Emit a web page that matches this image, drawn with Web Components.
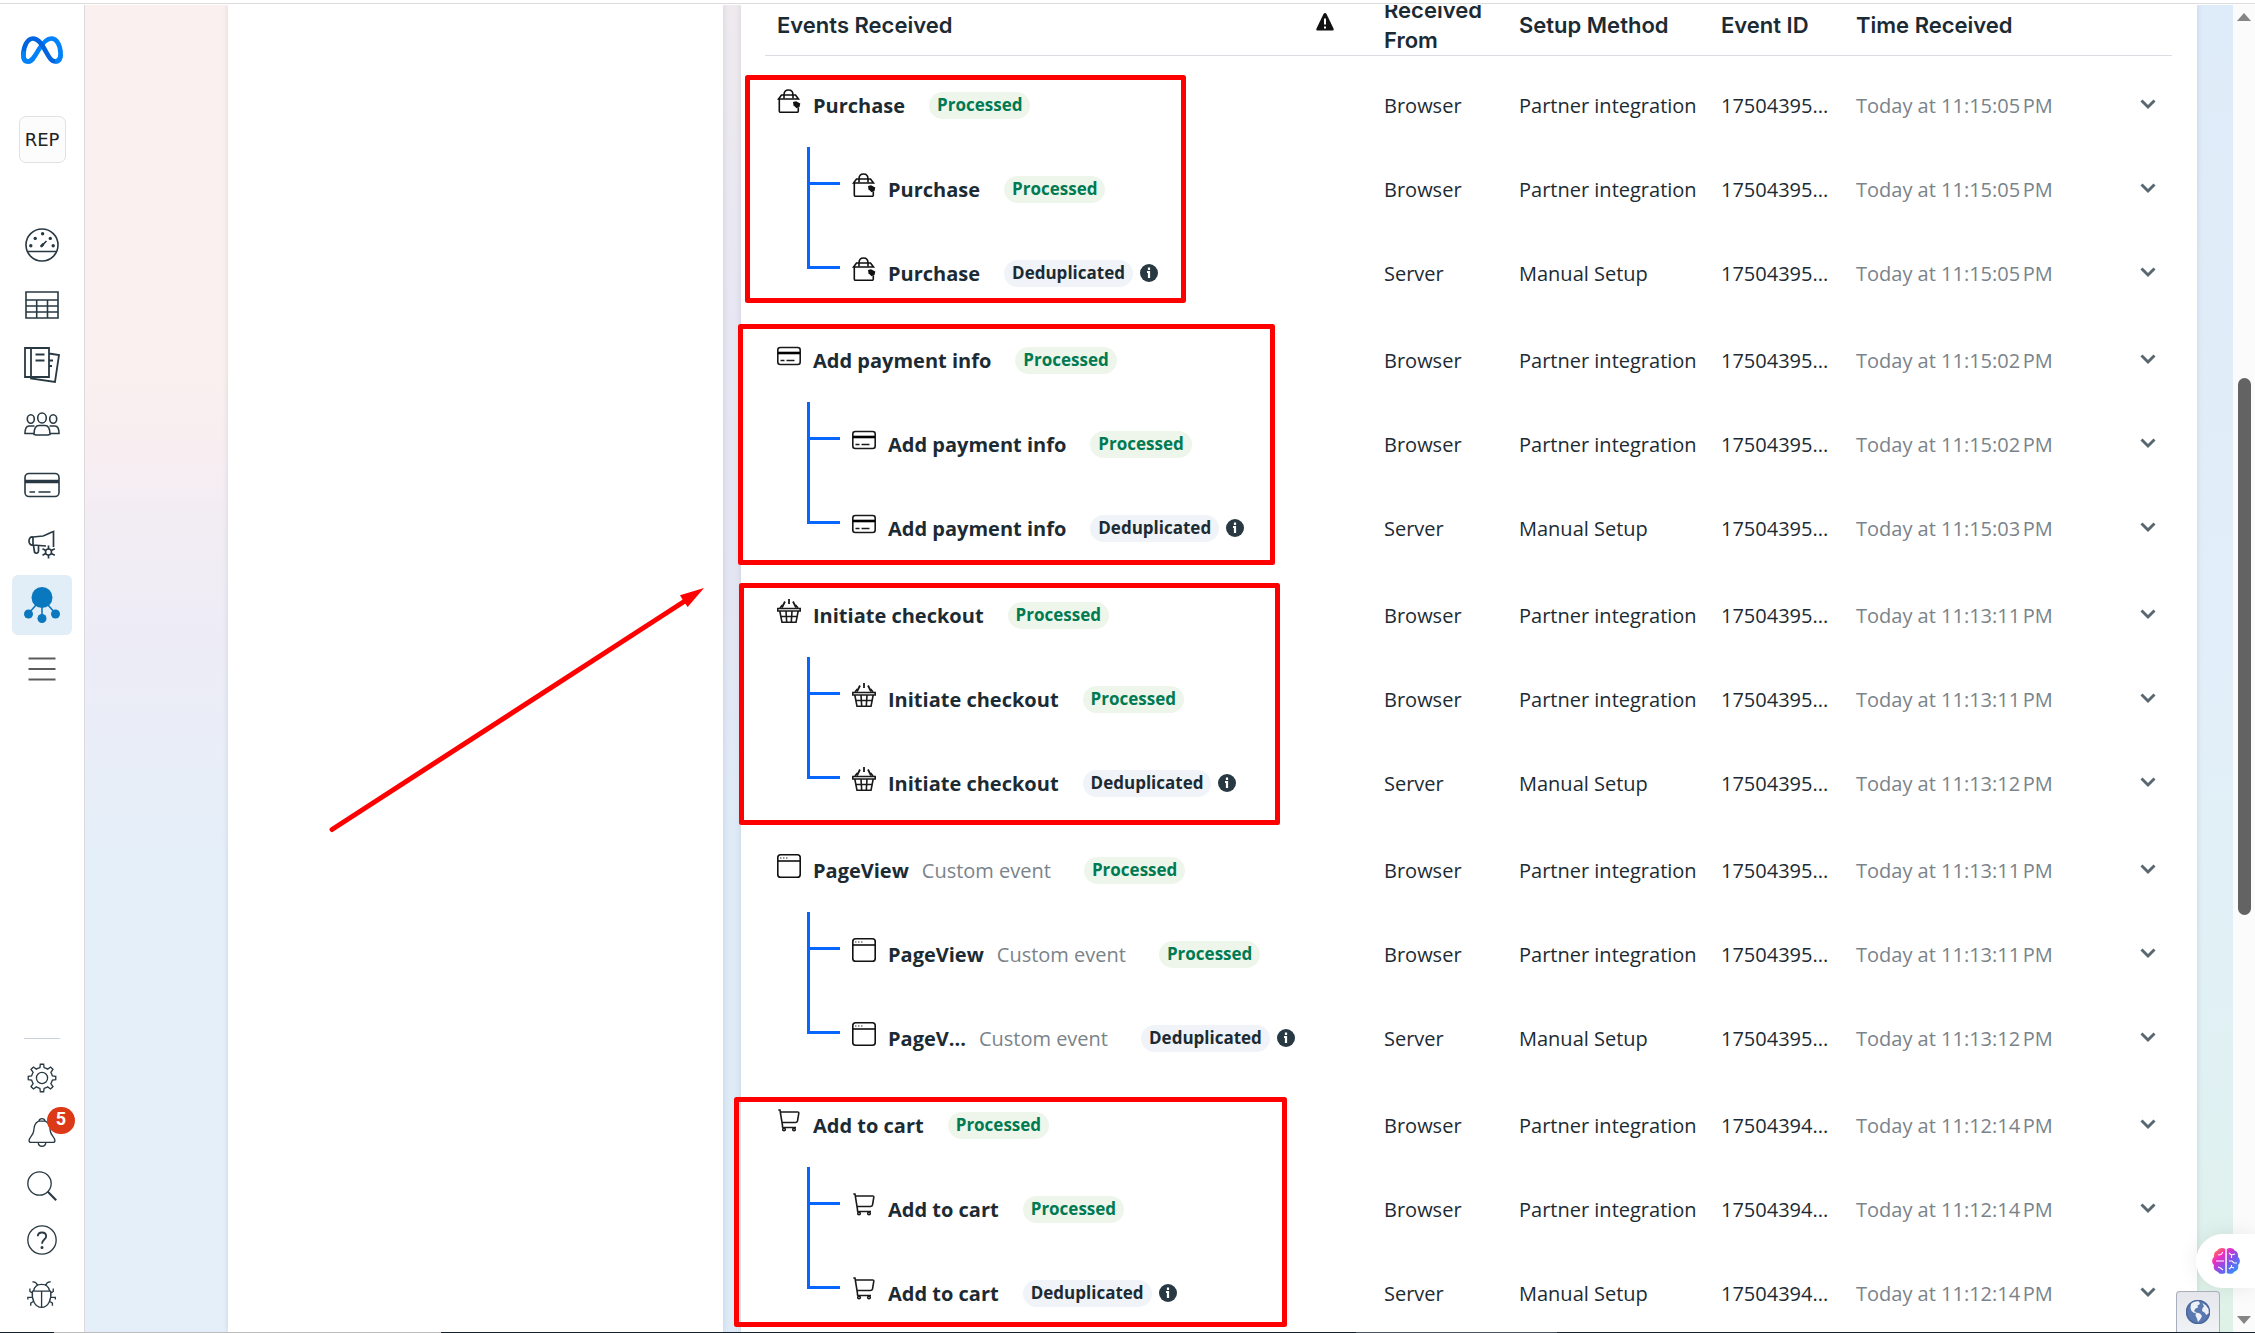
<!DOCTYPE html>
<html lang="en">
<head>
<meta charset="utf-8">
<title>Events Manager</title>
<style>
  html, body { margin: 0; height: 100%; overflow: hidden; }
  body {
    font-family: "Open Sans", "Noto Sans", sans-serif;
    font-size: 20px; line-height: 28px; color: #1c2b33; background: #fff;
  }
</style>
</head>
<body>
<events-app></events-app>
<script>
const ICONS = {
  meta: ['0 0 42 28', '<g fill="none" stroke-width="4.6"><path stroke="#0082fb" d="M34.5 25.5C38.5 25.5 39.6 22 39.6 18C39.6 9 35.500 2.500 30.300 2.500C25 2.500 21 8 17.500 14C13 21.500 11 25.500 7 25.500C4 25.500 2.400 23 2.400 19"/><path stroke="#0064e0" d="M2.400 19C2.400 10 6.500 2.500 12 2.500C17 2.500 20 7 24 14C28 21 30 25.500 34.500 25.500"/><path stroke="#0082fb" d="M2.400 15V19C2.400 23 4 25.500 7 25.500C9 25.500 10.500 24.500 12 22.500M34 25.500C38.500 25.500 39.600 22 39.600 18"/></g>'],
  gauge: ['0 0 36 36', '<circle cx="18" cy="18" r="16"/><path d="M4 24.500H32M17 19.500L22.500 14"/><path stroke-width="2.600" stroke-linecap="round" d="M17.500 19L19 17.500"/><g fill="#283943" stroke="none"><circle cx="6.800" cy="18.700" r="1.700"/><circle cx="11.200" cy="11.400" r="1.700"/><circle cx="18.600" cy="6.800" r="1.700"/><circle cx="26.300" cy="11.400" r="1.700"/><circle cx="29.200" cy="18.700" r="1.700"/></g>'],
  table: ['0 0 36 36', '<path d="M2 5H34V31H2zM2 13H34M2 19H34M2 25H34M12.700 13V31M23.500 13V31"/>'],
  pages: ['0 0 36 36', '<path stroke-width="1.800" d="M1 1H25V30H1zM7 1V30M11.500 7.500H20.500M11.500 13.500H20.500M25 6.500L35 8L31 35L7 31.500V30M25 13.500H29M25 19H28"/>'],
  people: ['0 0 36 36', '<ellipse cx="18" cy="11" rx="4.300" ry="5"/><ellipse cx="6.800" cy="12" rx="3.500" ry="4.200"/><ellipse cx="29.200" cy="12" rx="3.500" ry="4.200"/><path d="M10 27.500C10 21 12 18.500 15 18.500H21C24 18.500 26 21 26 27.500L24 28H12zM10.500 19H5C2.500 19 1 21.500 1 26.500H9.500M25.500 19H31C33.500 19 35 21.500 35 26.500H26.500"/>'],
  card: ['0 0 36 36', '<rect x="1" y="6.500" width="34" height="23" rx="4"/><path stroke-width="3.500" d="M1 14.500H35"/><path d="M5.500 25H11M14.500 25H26.500"/>'],
  horn: ['0 0 36 36', '<path stroke-width="1.700" d="M9 10L19 9C23 8 26 5.500 29.500 4.500V20M22 19L9 18M9 10V18M9 10C6.500 9.500 5 11.500 5 14S6.500 18.500 9 18M9.500 18.500L10.500 25C11.500 27 14.500 26.500 14.500 24V19"/><circle cx="24.500" cy="25" r="3"/><path stroke-width="1.700" d="M24.500 18.500V22M24.500 28V31.500M18.500 21.700L21.800 23.500M27.200 26.500L30.800 28.300M18.500 28.300L21.800 26.500M27.200 23.500L30.800 21.700"/>'],
  nodes: ['0 0 36 36', '<g stroke="#0a78be" fill="none"><path d="M18 20V30M12 18L5 26M24 18L31 26"/></g><g fill="#0a78be" stroke="none"><circle cx="18" cy="10.500" r="10.500"/><circle cx="4.500" cy="27" r="4.500"/><circle cx="18" cy="31.500" r="4.500"/><circle cx="31.500" cy="27" r="4.500"/></g>'],
  menu: ['0 0 36 36', '<path stroke="#5c5c5c" stroke-width="1.800" d="M4.500 7.500H31.500M4.500 18H31.500M4.500 28.500H31.500"/>'],
  gear: ['0 0 36 36', '<circle cx="18" cy="18" r="6.700"/><path d="M15.500 5.500L16 1.500H20L20.500 5.500C22 6 23.500 6.500 24.800 7.300L28.300 4.800L31.200 7.700L28.700 11.200C29.500 12.500 30 14 30.500 15.500L34.500 16V20L30.500 20.500C30 22 29.500 23.500 28.700 24.800L31.200 28.300L28.300 31.200L24.800 28.700C23.500 29.500 22 30 20.500 30.500L20 34.500H16L15.500 30.500C14 30 12.500 29.500 11.200 28.700L7.700 31.200L4.800 28.300L7.300 24.800C6.500 23.500 6 22 5.500 20.500L1.500 20V16L5.500 15.500C6 14 6.500 12.500 7.300 11.200L4.800 7.700L7.700 4.800L11.200 7.300C12.500 6.500 14 6 15.500 5.500Z"/>'],
  bell: ['0 0 36 36', '<path d="M14.500 4.500C15 1 21 1 21.500 4.500M14 5H22C27 7 27.500 12 28 17C28.500 22 33.500 24 33.500 28.500C33.500 30 32.500 30.500 31 30.500H5C3.500 30.500 2.500 30 2.500 28.500C2.500 24 7.500 22 8 17C8.500 12 9 7 14 5M13.500 31C14 36.500 22 36.500 22.500 31"/>'],
  search: ['0 0 36 36', '<circle cx="15" cy="15" r="14"/><path stroke-width="2.600" d="M25 25L35 35"/>'],
  help: ['0 0 36 36', '<circle cx="18" cy="18" r="17"/><path stroke-width="2.200" d="M13 13.500C13 7.500 23 7.500 23 13.500C23 17.500 18 17.500 18 22.500"/><circle cx="18" cy="27" r="1" fill="#283943"/>'],
  bug: ['0 0 36 36', '<path d="M8 14C9 9 12 6.500 17.500 6.500S26 9 27 14L28.500 15C29.500 24 26 34 17.500 34S5.500 24 6.500 15zM7 14.500H28M17.500 14.500V34M12.500 7.500C11.500 4.500 9.500 3 6.500 3.500M22.500 7.500C23.500 4.500 25.500 3 28.500 3.500M6.500 17L3.500 15V11.500M28.500 17L31.500 15V11.500M6 22H1V24.500M29 22H34V24.500M7.500 27L4.500 29V32M27.500 27L30.500 29V32"/>'],
  bag: ['0 0 24 24', '<g stroke="#111" fill="none"><path d="M7 9.500V6C7 2.500 8.500 1 11.500 1S16 2.500 16 6V9.500"/><path d="M4.500 6H18.500L21.500 10H1.500zM2.300 10V22C2.300 23 2.800 23.300 3.500 23.300H20C21 23.300 21.300 23 21.300 22V18.500"/></g><path fill="#111" stroke="none" d="M16 13L19 12.300L23.300 14.500L22.500 18L19.500 19.300L16.500 16.300z"/>'],
  pay: ['0 0 24 24', '<g stroke="#1a1a1a" fill="none"><rect x=".800" y="3.500" width="22.400" height="17" rx="2.500"/><path stroke="#000" stroke-width="2.600" d="M1 9H23"/><path d="M3.500 16.500H7.500M9.500 16.500H17.500"/></g>'],
  basket: ['0 0 24 24', '<g stroke="#1a1a1a" fill="none"><path stroke-width="1.800" d="M12 0V5M8 2.500L5 8.500M16 2.500L19 8.500M5.500 6L3 9M18.500 6L21 9"/><path d="M.8 9.500H23.200V12H.8zM2.800 12L5 23.300H19L21.200 12M3.500 17.500H20.500M9 12L9.700 23M15 12L14.300 23"/></g>'],
  page: ['0 0 24 24', '<g stroke="#111" fill="none"><rect x=".800" y=".800" width="22.400" height="22.400" rx="2.800"/><path d="M1 7H23"/><path stroke="#777" stroke-width="1.500" stroke-dasharray="1.500 1.500" d="M3 4H11"/></g>'],
  cart: ['0 0 24 24', '<g stroke="#1a1a1a" fill="none"><path d="M1.300 1H3L5.500 16.500C5.300 18 5.500 18.500 6.500 18.500H19M3.500 3H20.500C21.700 3 22 3.500 21.700 4.800L20.500 12C20.200 13 19.700 13.500 18.500 13.500H5"/><circle cx="7" cy="20.500" r="1.300"/><circle cx="17" cy="20.500" r="1.300"/></g>'],
  warn: ['0 0 18 18', '<path fill="#111" stroke="none" d="M7.500 1C8.200-.3 9.800-.3 10.500 1L17.500 15.500C18 16.800 17.500 17.500 16.500 17.500H1.500C.5 17.500 0 16.800.5 15.500z"/><path stroke="#fff" stroke-width="2" d="M9 5.500V11.500M9 13.500V15.500"/>'],
  info: ['0 0 18 18', '<circle cx="9" cy="9" r="9" fill="#283943" stroke="none"/><path stroke="#fff" stroke-width="2.200" fill="none" d="M9 3.500V6M7 8H9V14"/>'],
  chevron: ['0 0 16 16', '<path fill="none" stroke="#596870" stroke-width="2.900" d="M1.500 4.500L8 11L14.500 4.500"/>'],
  brain: ['0 0 28 26', '<defs><linearGradient id="b" x1="0" y1="0" x2="1" y2="1"><stop offset="0" stop-color="#ff9b19"/><stop offset=".3" stop-color="#f22bc0"/><stop offset=".58" stop-color="#7a55ee"/><stop offset="1" stop-color="#1da7ff"/></linearGradient></defs><path fill="url(#b)" stroke="none" d="M13.300 1V25C10 26.500 7 26 6 24C2.500 23 1 20 2 17C-.5 15-.5 11 2 9C1.500 5.500 3 3 5.500 2.500C7-.3 11-.5 13.300 1zM14.800 1C17-.5 21-.3 22.500 2.500C25 3 26.500 5.500 26 9C28.500 11 28.500 15 26 17C27 20 25.500 23 22 24C21 26 18 26.500 14.800 25z"/><path fill="none" stroke="#fff" stroke-width="1.100" d="M4 13H12M6 7L9 6.500L11 4M6 19L8.500 20L11 22M17 5L19.500 7L23 6M19.500 7V10M17 13H20L22 15H25M17 21L19.500 19L22 20M19.500 19V17"/>'],
  globe: ['0 0 24 24', '<circle cx="12" cy="12" r="11.500" fill="#5b78b0" stroke="#4a679f"/><path fill="#eef2f8" stroke="none" d="M5 4C7 2 10 1 13 1.500L14 4L11.500 5.500L12 7.500L9.500 8.500L8 11L10.500 12.500L8 13L5.500 11L4.500 8zM10 12.500L14 13.500L16 16L14.500 19L12 22L11 18.500L9.500 15.500zM16.500 3L20 5.500L22.500 9L22.800 13L20.500 15L18.500 12.500L16 11L16.500 8L18 6.500z"/>']
};

class UiIcon extends HTMLElement {
  constructor() { super(); this.attachShadow({ mode: 'open' }); }
  connectedCallback() {
    const [box, art] = ICONS[this.getAttribute('name')];
    const w = this.getAttribute('width') || 24, h = this.getAttribute('height') || w;
    this.shadowRoot.innerHTML = `<style>:host{display:block;flex:none;line-height:0}</style>
      <svg width="${w}" height="${h}" viewBox="${box}" fill="none" stroke="#283943" stroke-width="1.600" aria-hidden="true">${art}</svg>`;
  }
}
customElements.define('ui-icon', UiIcon);

class StatusBadge extends HTMLElement {
  constructor() {
    super();
    this.attachShadow({ mode: 'open' }).innerHTML = `<style>
      :host{display:block;flex:none;padding:0 8px 2px;border-radius:14px;background:#eef6eb;color:#007a52;
        font-size:17px;font-weight:700;line-height:25px;white-space:nowrap}
      :host([kind=dedup]){background:#f0f3f7;color:#1c2b33}
    </style><slot></slot>`;
  }
}
customElements.define('status-badge', StatusBadge);

class TreeBranch extends HTMLElement {
  constructor() { super(); this.attachShadow({ mode: 'open' }); }
  connectedCallback() {
    const end = this.hasAttribute('last') ? 38 : 84;
    this.shadowRoot.innerHTML = `<style>:host{display:block;flex:none;line-height:0;margin:0 12px 0 30px}</style>
      <svg width="33" height="84" fill="#0866ff" aria-hidden="true"><path d="M0 0H3V${end}H0zM0 35H33V38H0z"/></svg>`;
  }
}
customElements.define('tree-branch', TreeBranch);

class SideNav extends HTMLElement {
  constructor() {
    super();
    const link = (icon, label, cls = '') =>
      `<a href="#" aria-label="${label}" class="${cls}"><ui-icon name="${icon}" width="36"></ui-icon></a>`;
    const tool = (icon, label, extra = '') =>
      `<button type="button" aria-label="${label}"><ui-icon name="${icon}" width="30"></ui-icon>${extra}</button>`;
    this.attachShadow({ mode: 'open' }).innerHTML = `<style>
      :host{display:flex;flex-direction:column;align-items:center;flex:none;width:84px;background:#fff}
      .logo{display:block;margin-top:31px}
      .brand{box-sizing:border-box;width:47px;height:47px;margin:52px 0;border:1px solid #dfe1e4;border-radius:7px;
        display:flex;align-items:center;justify-content:center;background:#fcfcfc;color:#222;text-decoration:none;
        font:18px/20px "DejaVu Sans",sans-serif}
      nav,footer{display:flex;flex-direction:column;align-items:center}
      nav a{display:flex;align-items:center;justify-content:center;width:60px;height:60px;border-radius:6px}
      nav a.on{background:#e1edf7}
      nav a.more{margin-top:4px}
      footer{margin-top:auto;padding-bottom:11px}
      hr{width:36px;height:1px;margin:0 0 12px;border:0;background:#cbd2d9}
      button{position:relative;display:flex;align-items:center;justify-content:center;width:54px;height:54px;
        padding:0;border:0;background:none}
      b{position:absolute;left:32px;top:2px;width:28px;height:27px;border-radius:14px;background:#dc3a17;color:#fff;
        font:700 18px/24px Roboto,sans-serif;text-align:center}
    </style>
    <a class="logo" href="#" aria-label="Home"><ui-icon name="meta" width="42" height="28"></ui-icon></a>
    <a class="brand" href="#">REP</a>
    <nav>${link('gauge', 'Overview')}${link('table', 'Campaigns')}${link('pages', 'Reports')}${link('people', 'Audiences')}${link('card', 'Billing')}${link('horn', 'Ad settings')}${link('nodes', 'Events', 'on')}${link('menu', 'All tools', 'more')}</nav>
    <footer><hr>${tool('gear', 'Settings')}${tool('bell', 'Notifications', '<b>5</b>')}${tool('search', 'Search')}${tool('help', 'Help')}${tool('bug', 'Report a problem')}</footer>`;
  }
}
customElements.define('side-nav', SideNav);

const GROUPS = [
  { icon: 'bag', name: 'Purchase', id: '17504395...', times: ['11:15:05', '11:15:05', '11:15:05'] },
  { icon: 'pay', name: 'Add payment info', id: '17504395...', times: ['11:15:02', '11:15:02', '11:15:03'] },
  { icon: 'basket', name: 'Initiate checkout', id: '17504395...', times: ['11:13:11', '11:13:11', '11:13:12'] },
  { icon: 'page', name: 'PageView', short: 'PageV...', custom: true, id: '17504395...', times: ['11:13:11', '11:13:11', '11:13:12'] },
  { icon: 'cart', name: 'Add to cart', id: '17504394...', times: ['11:12:14', '11:12:14', '11:12:14'] }
];

class EventsTable extends HTMLElement {
  constructor() {
    super();
    const row = (g, i) => {
      const server = i === 2;
      const name = server && g.short ? g.short : g.name;
      return `<tr><td><div class="event">
        ${i ? `<tree-branch${server ? ' last' : ''}></tree-branch>` : ''}
        <ui-icon class="kind" name="${g.icon}" width="24"></ui-icon>
        <strong>${name}</strong>${g.custom ? '<span class="custom">Custom event</span>' : ''}
        <status-badge${server ? ' kind="dedup"' : ''}>${server ? 'Deduplicated' : 'Processed'}</status-badge>
        ${server ? '<ui-icon class="info" name="info" width="18"></ui-icon>' : ''}
      </div></td><td></td><td><div class="value">${server ? 'Server' : 'Browser'}</div></td>
      <td><div class="value">${server ? 'Manual Setup' : 'Partner integration'}</div></td><td><div class="value">${g.id}</div></td>
      <td><div class="value time">Today at ${g.times[i]}\u202fPM</div></td>
      <td class="toggle"><button type="button" aria-label="Show details"><ui-icon name="chevron" width="16"></ui-icon></button></td></tr>`;
    };
    this.attachShadow({ mode: 'open' }).innerHTML = `<style>
      :host{display:block}
      table{width:100%;table-layout:fixed;border-collapse:separate;border-spacing:0}
      .c-warn{width:68px}.c-from,.c-id{width:135px}.c-setup{width:202px}.c-time{width:276px}.c-toggle{width:48px}
      th,td{padding:0 8px;text-align:left;white-space:nowrap}
      th:first-child,td:first-child{padding:0 0 0 12px}
      th{height:60px;border-bottom:1px solid #dadde1;font:600 22px/30px Inter,sans-serif;white-space:normal}
      th ui-icon{margin-bottom:6px}
      tbody tr:first-child td{padding-top:3px}
      tbody:nth-of-type(1) tr:first-child td{padding-top:7px}
      .event{display:flex;align-items:center;height:84px}
      .kind{margin:0 12px 8px 0}
      strong,.custom,.value{padding-top:2px}
      strong{font-weight:700}
      .custom{margin:0 9px 0 13px;color:#7a838a}
      status-badge{margin-left:24px}
      .info{margin-left:7px}
      .time{color:#7a838a}
      td.toggle{padding:0}
      button{display:flex;align-items:center;justify-content:center;width:48px;height:32px;padding:0 0 2px;border:0;background:none}
    </style>
    <table>
      <colgroup><col><col class="c-warn"><col class="c-from"><col class="c-setup"><col class="c-id"><col class="c-time"><col class="c-toggle"></colgroup>
      <thead><tr><th>Events Received</th><th aria-label="Warnings"><ui-icon name="warn" width="18"></ui-icon></th><th>Received From</th><th>Setup Method</th><th>Event ID</th><th>Time Received</th><th aria-label="Details"></th></tr></thead>
      ${GROUPS.map(g => `<tbody>${[0, 1, 2].map(i => row(g, i)).join('')}</tbody>`).join('')}
    </table>`;
  }
}
customElements.define('events-table', EventsTable);

class ScrollRail extends HTMLElement {
  constructor() {
    super();
    this.attachShadow({ mode: 'open' }).innerHTML = `<style>
      :host{display:flex;flex-direction:column;align-items:center;flex:none;width:22px;background:#fbfbfb;padding:8px 0;box-sizing:border-box}
      .up,.down{border:7px solid transparent;border-top-width:0;border-bottom:8px solid #858585}
      .down{border-bottom-width:0;border-top:8px solid #858585}
      .before{flex:357}.thumb{flex:537;width:13px;border-radius:7px;background:#636363}.after{flex:401}
    </style><div class="up"></div><div class="before"></div><div class="thumb"></div><div class="after"></div><div class="down"></div>`;
  }
}
customElements.define('scroll-rail', ScrollRail);

class MarkupLayer extends HTMLElement {
  constructor() {
    super();
    this.attachShadow({ mode: 'open' }).innerHTML = `<style>
      :host{position:fixed;inset:0;pointer-events:none}svg{width:100%;height:100%;display:block}
    </style><svg fill="none" stroke="#f00" stroke-width="5" stroke-linejoin="round" stroke-linecap="round" aria-hidden="true">
      <path d="M747.500 77.500H1183.500V300.500H747.500z"/>
      <path d="M740.500 326.500H1272.500V562.500H740.500z"/>
      <path d="M741.500 585.500H1277.500V822.500H741.500z"/>
      <path d="M736.500 1099.500H1284.500V1324.500H736.500z"/>
      <path d="M332 829.500L688 599"/>
      <path fill="#f00" stroke="none" d="M704 588L680 595.300L684 602L687.700 607z"/>
    </svg>`;
  }
}
customElements.define('markup-layer', MarkupLayer);

class FloatTools extends HTMLElement {
  constructor() {
    super();
    this.attachShadow({ mode: 'open' }).innerHTML = `<style>
      button{position:fixed;box-sizing:border-box;display:flex;align-items:center;padding:0;border:0}
      .brain{right:0;bottom:45px;width:59px;height:54px;padding-left:16px;border-radius:27px 0 0 27px;background:#fff;box-shadow:0 0 20px rgba(0,0,0,.08)}
      .globe{right:35px;bottom:1px;width:44px;height:41px;justify-content:center;border:1px solid #a9aebd;border-bottom:0;border-radius:4px 4px 0 0;background:linear-gradient(#e4e6ec,#f1f2f5)}
    </style>
    <button class="brain" type="button" aria-label="Assistant"><ui-icon name="brain" width="28" height="26"></ui-icon></button>
    <button class="globe" type="button" aria-label="Translate"><ui-icon name="globe" width="24"></ui-icon></button>`;
  }
}
customElements.define('float-tools', FloatTools);

class EventsApp extends HTMLElement {
  constructor() {
    super();
    this.attachShadow({ mode: 'open' }).innerHTML = `<style>
      :host{display:flex;flex-direction:column;height:100vh;overflow:hidden}
      .top{flex:none;height:3px;border-bottom:1px solid #dcdcdc;margin-bottom:1px}
      .main{flex:1;min-height:0;display:flex}
      .canvas{flex:1;min-width:0;display:flex;overflow:hidden;padding:0 36px 0 143px;border-left:1px solid #dcdadf;
        background:
          linear-gradient(#faf0ef 0 28%,#f8eef1 33%,#f3edf3 38%,#edecf6 48%,#e5eff9 64%) 0 0/143px 100% no-repeat,
          linear-gradient(#eeeaee,#e7e6f3 25%,#e4e5f2 45%,#deebf7 62%) 600px 0/100px 100% no-repeat,
          linear-gradient(#deebf8,#e2effa 50%,#e0f1f2 85%,#dff2e7) 100% 0/60px 100% no-repeat}
      .left{flex:none;width:495px;background:#fff;box-shadow:0 0 6px rgba(40,60,90,.14)}
      .right{flex:1;min-width:0;margin-left:18px;padding:0 25px 0 24px;background:#fff;box-shadow:0 0 6px rgba(40,60,90,.14)}
      events-table{margin-top:-10px}
      .strip{flex:none;height:1px;background:linear-gradient(90deg,#17222f 0 54px,#bcbcbc 54px 441px,#17222f 441px 1356px,#4a5360 1356px 1557px,#17222f 1557px)}
    </style>
    <div class="top"></div>
    <div class="main">
      <side-nav></side-nav>
      <main class="canvas"><section class="left"></section><section class="right"><events-table></events-table></section></main>
      <scroll-rail></scroll-rail>
    </div>
    <div class="strip"></div>
    <float-tools></float-tools>
    <markup-layer></markup-layer>`;
  }
}
customElements.define('events-app', EventsApp);
</script>
</body>
</html>
